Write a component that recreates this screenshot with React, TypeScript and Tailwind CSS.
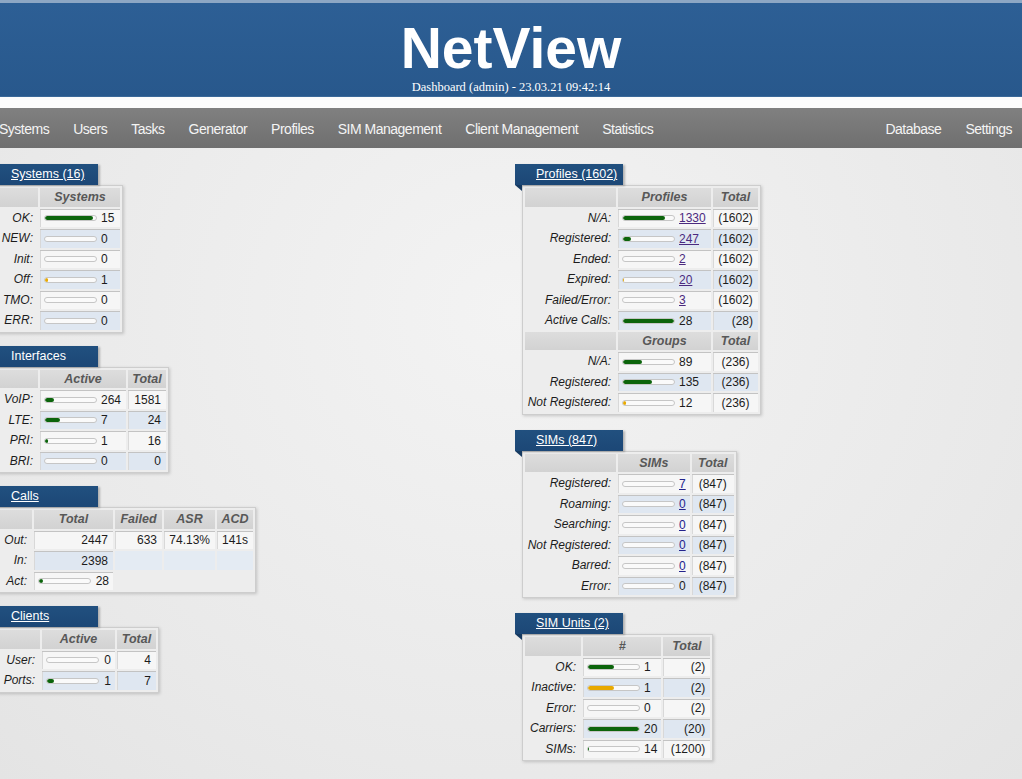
import { type JSX, type ReactNode } from "react";

type BarCell = {
  kind: "bar";
  pct: number;
  value: string;
  yellow?: boolean;
  link?: "visited" | "plain";
  right?: boolean;
};
type TextCell = { kind: "text"; value: string; align?: "left" | "center" | "right" };
type EmptyCell = { kind: "empty"; fill?: boolean };
type Cell = BarCell | TextCell | EmptyCell;

type Row = { header: string[] } | { label: string; cells: Cell[] };

type TableDef = {
  title: string;
  underline: boolean;
  widths: string[];
  rows: Row[];
};

const bar = (pct: number, value: string, extra: Partial<BarCell> = {}): BarCell => ({
  kind: "bar",
  pct,
  value,
  ...extra,
});
const txt = (value: string, align: TextCell["align"] = "right"): TextCell => ({
  kind: "text",
  value,
  align,
});

const LEFT: TableDef[] = [
  {
    title: "Systems (16)",
    underline: true,
    widths: ["w-[38px]", "w-[80px]"],
    rows: [
      { header: ["", "Systems"] },
      { label: "OK:", cells: [bar(94, "15")] },
      { label: "NEW:", cells: [bar(0, "0")] },
      { label: "Init:", cells: [bar(0, "0")] },
      { label: "Off:", cells: [bar(6, "1", { yellow: true })] },
      { label: "TMO:", cells: [bar(0, "0")] },
      { label: "ERR:", cells: [bar(0, "0")] },
    ],
  },
  {
    title: "Interfaces",
    underline: false,
    widths: ["w-[38px]", "w-[86px]", "w-[38px]"],
    rows: [
      { header: ["", "Active", "Total"] },
      { label: "VoIP:", cells: [bar(17, "264"), txt("1581")] },
      { label: "LTE:", cells: [bar(29, "7"), txt("24")] },
      { label: "PRI:", cells: [bar(6, "1"), txt("16")] },
      { label: "BRI:", cells: [bar(0, "0"), txt("0")] },
    ],
  },
  {
    title: "Calls",
    underline: true,
    widths: ["w-[32px]", "w-[79px]", "w-[47px]", "w-[51px]", "w-[36px]"],
    rows: [
      { header: ["", "Total", "Failed", "ASR", "ACD"] },
      { label: "Out:", cells: [txt("2447"), txt("633"), txt("74.13%"), txt("141s")] },
      {
        label: "In:",
        cells: [txt("2398"), { kind: "empty", fill: true }, { kind: "empty", fill: true }, { kind: "empty", fill: true }],
      },
      {
        label: "Act:",
        cells: [bar(8, "28", { right: true }), { kind: "empty" }, { kind: "empty" }, { kind: "empty" }],
      },
    ],
  },
  {
    title: "Clients",
    underline: true,
    widths: ["w-[40px]", "w-[73px]", "w-[39px]"],
    rows: [
      { header: ["", "Active", "Total"] },
      { label: "User:", cells: [bar(0, "0", { right: true }), txt("4")] },
      { label: "Ports:", cells: [bar(14, "1", { right: true }), txt("7")] },
    ],
  },
];

const RIGHT: TableDef[] = [
  {
    title: "Profiles (1602)",
    underline: true,
    widths: ["w-[91px]", "w-[93px]", "w-[45px]"],
    rows: [
      { header: ["", "Profiles", "Total"] },
      { label: "N/A:", cells: [bar(83, "1330", { link: "visited" }), txt("(1602)", "center")] },
      { label: "Registered:", cells: [bar(15, "247", { link: "visited" }), txt("(1602)", "center")] },
      { label: "Ended:", cells: [bar(0, "2", { link: "visited" }), txt("(1602)", "center")] },
      { label: "Expired:", cells: [bar(1, "20", { link: "visited", yellow: true }), txt("(1602)", "center")] },
      { label: "Failed/Error:", cells: [bar(0, "3", { link: "visited" }), txt("(1602)", "center")] },
      { label: "Active Calls:", cells: [bar(100, "28"), txt("(28)")] },
      { header: ["", "Groups", "Total"] },
      { label: "N/A:", cells: [bar(38, "89"), txt("(236)", "center")] },
      { label: "Registered:", cells: [bar(57, "135"), txt("(236)", "center")] },
      { label: "Not Registered:", cells: [bar(5, "12", { yellow: true }), txt("(236)", "center")] },
    ],
  },
  {
    title: "SIMs (847)",
    underline: true,
    widths: ["w-[91px]", "w-[71px]", "w-[42px]"],
    rows: [
      { header: ["", "SIMs", "Total"] },
      { label: "Registered:", cells: [bar(0, "7", { link: "plain", right: true }), txt("(847)", "center")] },
      { label: "Roaming:", cells: [bar(0, "0", { link: "plain", right: true }), txt("(847)", "center")] },
      { label: "Searching:", cells: [bar(0, "0", { link: "plain", right: true }), txt("(847)", "center")] },
      { label: "Not Registered:", cells: [bar(0, "0", { link: "plain", right: true }), txt("(847)", "center")] },
      { label: "Barred:", cells: [bar(0, "0", { link: "plain", right: true }), txt("(847)", "center")] },
      { label: "Error:", cells: [bar(0, "0", { right: true }), txt("(847)", "center")] },
    ],
  },
  {
    title: "SIM Units (2)",
    underline: true,
    widths: ["w-[56px]", "w-[78px]", "w-[47px]"],
    rows: [
      { header: ["", "#", "Total"] },
      { label: "OK:", cells: [bar(50, "1"), txt("(2)")] },
      { label: "Inactive:", cells: [bar(50, "1", { yellow: true }), txt("(2)")] },
      { label: "Error:", cells: [bar(0, "0"), txt("(2)")] },
      { label: "Carriers:", cells: [bar(100, "20"), txt("(20)")] },
      { label: "SIMs:", cells: [bar(1, "14"), txt("(1200)")] },
    ],
  },
];

const NAV_LEFT = ["Systems", "Users", "Tasks", "Generator", "Profiles", "SIM Management", "Client Management", "Statistics"];
const NAV_RIGHT = ["Database", "Settings"];

function Bar({ pct, yellow }: { pct: number; yellow?: boolean }): JSX.Element {
  return (
    <span className="inline-block h-[6px] w-[53px] shrink-0 overflow-hidden rounded-full border border-[#c6c6c6] bg-[#fafafa]">
      {pct > 0 && (
        <span
          className={`block h-full rounded-full ${yellow ? "bg-[#e8a900]" : "bg-[#0b640b]"}`}
          style={{ width: `${pct}%` }}
        />
      )}
    </span>
  );
}

function ValueCell({ cell, odd }: { cell: Cell; odd: boolean }): JSX.Element {
  const bg = odd ? "bg-[#dfe7f1]" : "bg-[#f6f6f6]";
  const boxed = `h-[18.5px] border-t border-[#c3c3c3] p-0 shadow-[inset_1px_0_0_#d8d8d8] ${bg}`;

  if (cell.kind === "empty") {
    return <td className={`h-[18.5px] p-0 ${cell.fill ? "bg-[#e4ebf3]" : ""}`} />;
  }
  if (cell.kind === "text") {
    const align =
      cell.align === "center" ? "text-center" : cell.align === "left" ? "text-left pl-[5px]" : "text-right pr-[5px]";
    return <td className={`${boxed} ${align}`}>{cell.value}</td>;
  }

  let value: ReactNode = cell.value;
  if (cell.link === "visited") value = <a className="text-[#4b2a7f] underline">{cell.value}</a>;
  if (cell.link === "plain") value = <a className="text-[#23238c] underline">{cell.value}</a>;

  return (
    <td className={boxed}>
      <div className="flex items-center gap-[4px] pl-[4px] pr-[4px]">
        <Bar pct={cell.pct} yellow={cell.yellow} />
        <span className={cell.right ? "ml-auto" : ""}>{value}</span>
      </div>
    </td>
  );
}

function StatTable({ def }: { def: TableDef }): JSX.Element {
  let index = 0;
  return (
    <table className="border-separate border-spacing-[2px] border border-[#cdcdcd] bg-[#ededed] text-[12px] leading-[16px] text-[#1c1c1c] shadow-[1px_1px_3px_rgba(0,0,0,0.18)]">
      <tbody>
        {def.rows.map((row, r) => {
          if ("header" in row) {
            index = 0;
            return (
              <tr key={r}>
                {row.header.map((h, c) => (
                  <th
                    key={c}
                    className={`${def.widths[c]} h-[18.5px] bg-[linear-gradient(#dddddd,#d2d2d2)] p-0 text-center text-[12.5px] font-bold italic text-[#585858]`}
                  >
                    {h}
                  </th>
                ))}
              </tr>
            );
          }
          const odd = index % 2 === 1;
          index += 1;
          return (
            <tr key={r}>
              <td className="h-[18.5px] whitespace-nowrap p-0 pr-[5px] text-right italic">{row.label}</td>
              {row.cells.map((cell, c) => (
                <ValueCell key={c} cell={cell} odd={odd} />
              ))}
            </tr>
          );
        })}
      </tbody>
    </table>
  );
}

function Panel({ def }: { def: TableDef }): JSX.Element {
  return (
    <section className="flex flex-col items-start">
      <div className="relative h-[21px] w-[108px] bg-[linear-gradient(#21507f,#1c4776)] pl-[21px] text-[12.5px] leading-[21px] text-white shadow-[2px_1px_2px_rgba(0,0,0,0.25)]">
        <span className={def.underline ? "underline" : ""}>{def.title}</span>
        <span className="absolute left-0 top-full h-0 w-0 border-l-[7px] border-t-[6px] border-l-transparent border-t-[#163a61]" />
      </div>
      <div className="ml-[7px]">
        <StatTable def={def} />
      </div>
    </section>
  );
}

export default function App(): JSX.Element {
  return (
    <div className="min-h-screen w-full overflow-hidden bg-[radial-gradient(ellipse_at_50%_40%,#f3f3f3_0%,#e9e9e9_70%,#e4e4e4_100%)] font-['Liberation_Sans',Arial,sans-serif]">
      <header className="h-[97px] border-t-[3px] border-b border-t-[#8da7c4] border-b-[#3b6999] bg-[linear-gradient(#2d5f95,#28588c)] text-center text-white">
        <h1 className="pt-[17px] text-[57px] font-bold leading-[57px]">NetView</h1>
        <p className="mt-[3px] font-['Liberation_Serif',serif] text-[12.5px] leading-[14px]">
          Dashboard (admin) - 23.03.21 09:42:14
        </p>
      </header>
      <div className="h-[11px] bg-[#fcfcfc]" />
      <nav className="flex h-[40px] items-center bg-[linear-gradient(#808080,#6f6f6f)] pt-[2px] text-[14px] tracking-[-0.5px] text-[#f4f4f4]">
        <ul className="ml-[-13px] flex">
          {NAV_LEFT.map((item) => (
            <li key={item} className="px-3">
              {item}
            </li>
          ))}
        </ul>
        <ul className="ml-auto mr-[-2px] flex">
          {NAV_RIGHT.map((item) => (
            <li key={item} className="px-3">
              {item}
            </li>
          ))}
        </ul>
      </nav>
      <main className="ml-[-10px] grid grid-cols-[525px_1fr] pt-[16px] pb-4">
        <div className="flex flex-col gap-[13px]">
          {LEFT.map((def) => (
            <Panel key={def.title} def={def} />
          ))}
        </div>
        <div className="flex flex-col gap-[15px]">
          {RIGHT.map((def) => (
            <Panel key={def.title} def={def} />
          ))}
        </div>
      </main>
    </div>
  );
}
